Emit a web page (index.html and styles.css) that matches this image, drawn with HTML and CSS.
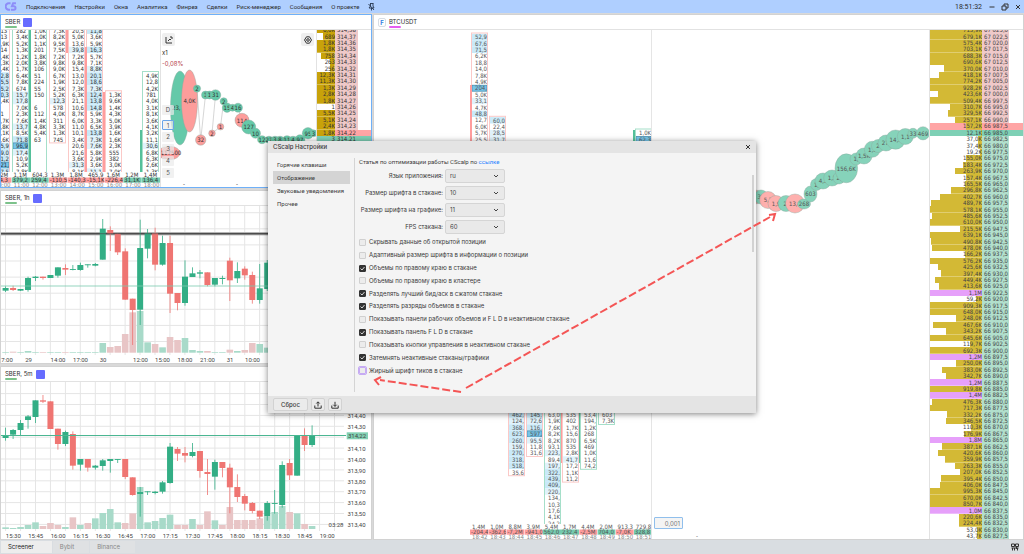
FILE: index.html
```html
<!DOCTYPE html>
<html lang="ru">
<head>
<meta charset="utf-8">
<title>CScalp</title>
<link rel="stylesheet" href="styles.css">
</head>
<body>
<header class="topbar">
  <svg class="logo" viewBox="0 0 12 10" aria-hidden="true"><path d="M5.500 1.500H3.500a3.200 3.200 0 0 0 0 7H5M11.500 1.500H8.300L7 4.800h2.200a1.850 1.850 0 0 1 0 3.700H6" fill="none" stroke="#8d8df8" stroke-width="2.200"/></svg>
  <nav class="menu">
    <button>Подключения</button><button>Настройки</button><button>Окна</button><button>Аналитика</button><button>Финрез</button><button>Сделки</button><button>Риск-менеджер</button><button>Сообщения</button><button>О проекте</button>
    <button class="pin" aria-label="Закрепить"><svg width="7" height="8" viewBox="0 0 7 8"><path d="M2 .5h3.500M2.500 .5v2.500L1 5h5M5 .5V3l1 2M3.500 5v2.500M.5 1l5.500 6" fill="none" stroke="#26374f" stroke-width=".9"/></svg></button>
  </nav>
  <time class="clock">18:51:32</time>
  <button class="win" aria-label="Свернуть"><svg width="8" height="8" viewBox="0 0 8 8"><path d="M1.500 4h5"/></svg></button>
  <button class="win" aria-label="Развернуть"><svg width="8" height="8" viewBox="0 0 8 8"><path d="M1 3h4v4H1zM3 3V1h4v4H5"/></svg></button>
  <button class="win" aria-label="Закрыть"><svg width="8" height="8" viewBox="0 0 8 8"><path d="M2 2l4 4M6 2L2 6"/></svg></button>
</header>

<main class="workspace">
  <section class="panel active">
    <h2 class="panel-title"><span class="ticker green">SBER</span><i class="swatch"></i></h2>
    <div class="panel-body">
      <svg class="clusters" id="sberClusters"></svg>
      <div class="tape">
        <svg class="fill" id="sberTape"></svg>
        <div class="tape-tools">
          <button class="tool" aria-label="График"><svg width="8" height="8" viewBox="0 0 8 8"><path d="M1 1v6h6M3 5l2-2 1 1M5 1h2v2"/></svg></button>
          <button class="tool" aria-label="Настройки стакана"><svg width="8" height="8" viewBox="0 0 8 8"><path d="M2.500 .8h3L7.500 4 5.500 7.200h-3L.5 4z"/><circle cx="4" cy="4" r="1.300"/></svg></button>
        </div>
        <p class="mult">x1</p>
        <p class="pct">-0,08%</p>
        <div class="lots"><button>D</button><button class="on">1</button><button>2</button><button>3</button><button>4</button><button>5</button></div>
      </div>
      <table class="ladder small" id="sberLadder"></table>
    </div>
  </section>

  <section class="panel big">
    <h2 class="panel-title"><b class="badge">F</b><span class="ticker pink">BTCUSDT</span></h2>
    <div class="panel-body">
      <div class="stage">
        <svg class="fill" id="btcStage"></svg>
        <input class="qty" aria-label="Объем" value="0,001">
      </div>
      <table class="ladder wide" id="btcLadder"></table>
    </div>
  </section>

  <section class="panel">
    <h2 class="panel-title"><span class="ticker green">SBER, 1h</span><i class="swatch"></i></h2>
    <div class="panel-body"><svg class="chart" id="hourChart"></svg></div>
  </section>
  <section class="panel">
    <h2 class="panel-title"><span class="ticker green">SBER, 5m</span><i class="swatch"></i></h2>
    <div class="panel-body"><svg class="chart" id="minuteChart"></svg></div>
  </section>
</main>

<footer class="tabs">
  <button class="tab current">Screener</button><button class="tab">Bybit</button><button class="tab">Binance</button>
  <button class="layout" aria-label="Раскладка"><svg width="8" height="8" viewBox="0 0 8 8"><path d="M.5 1h3v2.500h-3zM4.500 1h3v2.500h-3zM.5 5h7M1.500 5v2.500M3.500 5v2.500M5.500 3.500V6M6.500 5v2.500"/></svg></button>
</footer>

<div class="overlay">
  <section class="dialog" role="dialog" aria-label="CScalp Настройки">
    <header class="dialog-title"><h1>CScalp Настройки</h1><button class="win" aria-label="Закрыть"><svg width="8" height="8" viewBox="0 0 8 8"><path d="M2 2l4 4M6 2L2 6"/></svg></button></header>
    <div class="dialog-body">
      <nav class="side"><button>Горячие клавиши</button><button class="sel">Отображение</button><button>Звуковые уведомления</button><button>Прочее</button></nav>
      <form class="options">
        <p class="note">Статья по оптимизации работы CScalp по <a href="#">ссылке</a></p>
        <div class="selects">
          <label for="lang">Язык приложения:</label><select id="lang"><option>ru</option></select>
          <label for="domFont">Размер шрифта в стакане:</label><select id="domFont"><option>10</option></select>
          <label for="chartFont">Размер шрифта на графике:</label><select id="chartFont"><option>11</option></select>
          <label for="fps">FPS стакана:</label><select id="fps"><option>60</option></select>
        </div>
        <div class="checks">
          <label><input type="checkbox">Скрывать данные об открытой позиции</label>
          <label><input type="checkbox">Адаптивный размер шрифта в информации о позиции</label>
          <label><input type="checkbox" checked>Объемы по правому краю в стакане</label>
          <label><input type="checkbox">Объемы по правому краю в кластере</label>
          <label><input type="checkbox" checked>Разделять лучший бид/аск в сжатом стакане</label>
          <label><input type="checkbox" checked>Разделять разряды объемов в стакане</label>
          <label><input type="checkbox">Показывать панели рабочих объемов и F L D в неактивном стакане</label>
          <label><input type="checkbox" checked>Показывать панель F L D в стакане</label>
          <label><input type="checkbox">Показывать кнопки управления в неактивном стакане</label>
          <label><input type="checkbox" checked>Затемнять неактивные стаканы/графики</label>
          <label><input type="checkbox" class="marked">Жирный шрифт тиков в стакане</label>
        </div>
      </form>
      <i class="thumb"></i>
    </div>
    <footer class="dialog-foot">
      <button class="reset">Сброс</button>
      <button aria-label="Экспорт"><svg width="8" height="8" viewBox="0 0 8 8"><path d="M.8 4.500v2.700h6.400V4.500M4 5.500V1M2.300 2.500L4 .8l1.700 1.700"/></svg></button>
      <button aria-label="Импорт"><svg width="8" height="8" viewBox="0 0 8 8"><path d="M.8 4.500v2.700h6.400V4.500M4 .8v4.500M2.300 3.700L4 5.400l1.700-1.700"/></svg></button>
    </footer>
    <svg class="arrows" aria-hidden="true">
      <path class="dash" d="M198 247L502 76M193 251L112 239"/>
      <path d="M501 74l6-1-2 7M113 236l-6 3 4 5"/>
    </svg>
  </section>
</div>
<script src="app.js"></script>
</body>
</html>
```
FILE: styles.css
```css
* { box-sizing: border-box; }
html, body { height: 100%; margin: 0; }
body {
  display: flex; flex-direction: column; overflow: hidden;
  background: #d9d9d9; color: #2c2c2c;
  font: 6px/8px Inter, Roboto, "Liberation Sans", sans-serif;
}
h1, h2, p { margin: 0; font: inherit; }
button { font: inherit; color: inherit; border: 0; padding: 0; margin: 0; background: none; }
svg { display: block; }
button svg { fill: none; stroke: #333; stroke-width: 1; }

.topbar { flex: none; height: 13px; padding: 0 2px 0 5px; margin-bottom: 1px; display: flex; align-items: center; background: #afcfff; }
.logo { width: 12px; height: 9px; margin-right: 9px; }
.menu { display: flex; gap: 9px; flex: 1; font-family: Roboto, sans-serif; }
.clock { margin-right: 6px; font-size: 7px; font-family: Roboto, sans-serif; }
.win { width: 8px; height: 8px; }
.topbar .win { margin-left: 5px; }
.topbar .clock + .win { margin-left: 0; }

.workspace {
  flex: 1; min-height: 0; display: grid; gap: 2px 1px;
  grid-template-columns: 372px 1fr; grid-template-rows: repeat(3, minmax(0, 1fr));
}
.panel { display: flex; flex-direction: column; min-width: 0; min-height: 0; background: #fff; border: 1px solid #d2d2d2; }
.panel.active { border-color: #6fb0f8; }
.panel.big { grid-column: 2; grid-row: 1 / 4; }
.panel-title { flex: none; height: 15px; padding: 0 4px; display: flex; align-items: center; gap: 3px; border-bottom: 1px solid #e2e2e2; }
.ticker { position: relative; line-height: 10px; }
.ticker::after { content: ""; position: absolute; left: 0; bottom: -1px; width: 12px; height: 2px; border-radius: 1px; background: #7cc28b; }
.ticker.pink::after { background: #e55df0; }
.swatch { width: 9px; height: 9px; background: #666cff; border-radius: 1px; }
.badge { width: 8px; height: 9px; border: 1px solid #d8dde4; border-radius: 2px; color: #2f80e0; text-align: center; line-height: 7px; }
.panel-body { flex: 1; min-height: 0; display: flex; align-items: flex-end; overflow: hidden; }
.chart, .clusters, .tape, .stage { height: 100%; }
.chart { width: 100%; }
.clusters { flex: none; width: 159px; }
.tape, .stage { flex: 1; min-width: 0; position: relative; border-left: 1px solid #e2e2e2; }
.stage { border-left: 0; }
.fill { position: absolute; inset: 0; width: 100%; height: 100%; }

.tape-tools { position: relative; display: flex; justify-content: space-between; padding: 3px 2px 2px 1px; }
.tool { width: 13px; height: 13px; background: #efefef; border-radius: 2px; display: grid; place-items: center; }
.mult, .pct { position: relative; height: 11px; line-height: 10px; padding-left: 1px; }
.pct { color: #b64146; }
.lots { position: relative; display: flex; flex-direction: column; gap: 2px; width: 12px; margin: 35px 0 0 1px; color: #555; }
.lots button { height: 10px; background: rgba(235, 235, 235, .7); border-radius: 1px; text-align: center; }
.lots .on { border: 1px solid #6aa5e8; line-height: 7px; }
.lots button:first-child { margin-bottom: 3px; }

.ladder { flex: none; height: calc(100% + 3px); display: flex; flex-direction: column; border-left: 1px solid #e2e2e2; font: 6px/6px "DejaVu Sans Condensed", "DejaVu Sans", sans-serif; color: #444; }
.ladder tbody { flex: 1; display: flex; flex-direction: column; min-height: 0; }
.ladder tr { flex: 1 1 0; min-height: 0; display: flex; }
.ladder td { padding: 0; display: flex; align-items: center; white-space: nowrap; }
.ladder .vol { justify-content: flex-end; background: linear-gradient(var(--bar), var(--bar)) right / var(--w) 100% no-repeat; }
.ladder .price { padding-left: 2px; background: #efc9c9; }
.ladder .bid .price { background: #b1dfcc; }
.small { --bar: #c8a20a; width: 55px; color: #333; }
.small .vol { width: 18px; }
.small .price { width: 23px; }
.wide { --bar: #d3b935; width: 94px; }
.wide .vol { width: 52px; }
.wide .price { width: 27px; }
.ladder .huge { --bar: #e6a0fa; }
.ladder .best-ask, .ladder .best-ask .price { background: #ffa5a5; }
.ladder .best-bid, .ladder .best-bid .price { background: #7ed0b5; }
.qty { position: absolute; right: 246px; bottom: 10px; width: 29px; height: 12px; padding: 0 2px; border: 1px solid #90bfec; border-radius: 1px; background: #f4f4f4; font: inherit; color: #777; text-align: right; }

.cell { font: 6px "DejaVu Sans Condensed", "DejaVu Sans", sans-serif; fill: #333; }
.dim .cell { fill: #555; }
.mid { text-anchor: middle; }
.cell.time { fill: #888; }
.axis { font: 6px Roboto, sans-serif; fill: #444; text-anchor: middle; }
.grid { stroke: #e5e5e5; stroke-width: 1; fill: none; }

.tabs { flex: none; height: 14px; padding: 1px; display: flex; gap: 1px; background: #d9dde1; }
.tab { padding: 0 15px 0 7px; background: #dfe1e3; color: #888; }
.tab.current { background: #ededed; color: #222; padding-right: 18px; }
.layout { margin-left: auto; padding: 2px 4px; }

.overlay { position: absolute; inset: 0; display: grid; place-items: center; }
.dialog { position: relative; width: 488px; height: 272px; display: flex; flex-direction: column; background: #f4f4f4; box-shadow: 0 1px 6px rgba(0, 0, 0, .5); color: #3a3a3a; white-space: nowrap; }
.dialog-title { height: 12px; flex: none; display: flex; justify-content: space-between; align-items: center; padding: 0 4px 0 5px; background: #e4e4e4; }
.dialog-title h1 { font-weight: 500; }
.dialog-body { flex: 1; display: flex; min-height: 0; position: relative; padding-top: 5px; }
.side { flex: none; width: 82px; padding: 0 0 0 5px; display: flex; flex-direction: column; margin-right: 4px; font-family: Roboto, sans-serif; }
.side button { height: 13px; text-align: left; padding-left: 4px; }
.side .sel { background: #d4d4d4; }
.options { flex: 1; margin-bottom: 4px; border-left: 1px solid #d4d4d4; padding-left: 4px; display: flex; flex-direction: column; }
.note { height: 11px; line-height: 8px; font-family: Roboto, sans-serif; }
.note a { color: #1f82ff; text-decoration: none; }
.selects { display: grid; grid-template-columns: 84px 60px; gap: 3px 2px; align-items: center; text-align: right; }
.selects select { appearance: none; height: 14px; padding: 0 4px; border: 1px solid #d5d5d5; border-radius: 2px; font: inherit; color: #444;
  background: #e9e9e9 url("data:image/svg+xml,%3Csvg xmlns='http://www.w3.org/2000/svg' width='6' height='6'%3E%3Cpath d='M1 2l2 2 2-2' fill='none' stroke='%23444'/%3E%3C/svg%3E") right 5px center no-repeat; }
.checks { flex: 1; display: grid; grid-auto-rows: minmax(0, 1fr); margin: 2px 0 15px; }
.checks label { display: flex; align-items: center; gap: 3px; }
.checks input { appearance: none; width: 7px; height: 7px; margin: 0; border: 1px solid #d0d0d0; border-radius: 1px; background: #ececec; }
.checks input:checked { border-color: #333; background: #333 url("data:image/svg+xml,%3Csvg xmlns='http://www.w3.org/2000/svg' width='5' height='5'%3E%3Cpath d='M.5 2.500l1.500 1.500 2.500-3' fill='none' stroke='white' stroke-width='.8'/%3E%3C/svg%3E") center no-repeat; }
.checks .marked { outline: 1px solid #c6abf3; border-color: #c6abf3; }
.thumb { position: absolute; right: 2px; top: 22px; width: 2px; height: 77px; background: #d2d2d2; }
.dialog-foot { flex: none; height: 17px; display: flex; align-items: center; gap: 3px; padding-left: 5px; background: #e4e4e4; }
.dialog-foot button { width: 14px; height: 13px; display: grid; place-items: center; border: 1px solid #d2d2d2; border-radius: 2px; background: #ebebeb; }
.dialog-foot .reset { width: 35px; font-weight: 500; }
.arrows { position: absolute; inset: 0; width: 100%; height: 100%; overflow: visible; pointer-events: none; fill: none; stroke: #f45555; stroke-width: 2; }
.dash { stroke-dasharray: 8 3; }
```
FILE: app.js
```js
const GREEN = '#33ae85', RED = '#ef7572';
const PITCH = 6.4;
const byId = id => document.getElementById(id);
const rect = (x, y, w, h, fill, extra = '') => `<rect x="${x}" y="${y}" width="${w}" height="${h}" fill="${fill}" ${extra}/>`;
const text = (x, y, s, cls = 'cell') => `<text x="${x}" y="${y}" class="${cls}">${s}</text>`;

/* price ladders */
function ladder(id, rows, start, step, full, askIndex, format) {
  byId(id).innerHTML = '<tbody>' + rows.map((label, i) => {
    const n = parseFloat(label.replace(',', '.')) * (label.endsWith('M') ? 1e6 : label.endsWith('K') ? 1e3 : 1);
    const cls = [i > askIndex ? 'bid' : 'ask', n >= 1e6 ? 'huge' : '', i === askIndex ? 'best-ask' : '', i === askIndex + 1 ? 'best-bid' : ''].join(' ');
    return `<tr class="${cls}"><td class="vol" style="--w:${Math.min(100, n / full * 100).toFixed(1)}%">${label}</td><td class="price">${format(start - i * step)}</td></tr>`;
  }).join('') + '</tbody>';
}
const btc = '713,9 679,1 575,4 703,1 688,3 690,6 370,0 418,1 774,2 928,2 423,6 509,4 310,7 329,5 257,1 157,2 12,1 37,0 37,4 19,2 155,0 183,4 263,9 157,4 165,5 296,8 402,7 489,7 578,1 485,6 610,0 215,5 639,1 490,8 478,0 166,2 576,2 425,6 397,4 449,4 413,6 1,1M 59,2 909,3 648,0 248,0 467,6 343,2 645,6 119,7 692,3 1,2M 250,0 383,0 342,7 1,2M 919,8 1,4M 476,3 717,3 332,2 346,5 110,3 176,9 1,8M 387,1 420,6 359,9 263,3 207,0 395,4 406,0 995,3 670,0 850,7 1,0M 220,6 224,4 53,0 43,7'
  .split(' ').map(v => v.endsWith('M') ? v : v + 'K');
ladder('btcLadder', btc, 67025, 2.5, 5e5, 15, p => p.toFixed(1).replace('.', ',').replace(/^(\d\d)/, '$1 '));
ladder('sberLadder', '6,0K 689 1,8K 1,8K 758 263 256 12,3K 11,3K 1,3K 2,8K 1,8K 1 5,5K 5,1K 2,4K 1,8K 3 1,2K 2,0K 3,1K 1,4K 2,2K 5,0K 1,1K'.split(' '),
  314.38, 0.01, 1000, 16, p => p.toFixed(2).replace('.', ','));

/* volume clusters: x, first row centre, side, cells, frame edges */
function cluster(c, w = 17) {
  const color = c.side === 'g' ? '#a5dfc9' : '#fbc9c7';
  const cells = c.cells.split(' ');
  let out = '';
  cells.forEach((s, i) => {
    if (s === '.') return;
    const y = c.y + i * PITCH;
    const n = parseFloat(s.replace(',', '.'));
    const big = s.endsWith('K') || c.thousands && s.includes(',');
    const thousandsOnly = !c.thousands || !s.endsWith('K') || n > c.shade;
    const strong = (c.hot || []).includes(i);
    if (strong) out += rect(1, y - 3, w - 2, 6, '#76c4e8', 'stroke="#3f87a8" stroke-width=".7"');
    else if (big && thousandsOnly && n > c.shade) out += rect(1, y - 3.2, w - 1, PITCH, n > c.shade * 1.6 ? '#c9e9f8' : '#e0f2fb');
    out += text(4, y + 2.2, s);
  });
  const top = c.open ? c.y - 20 : c.y - 4, bottom = c.y + cells.length * PITCH - 3;
  out += `<rect x=".5" y="${top}" width="${w - 1}" height="${(c.long ? bottom + 60 : bottom) - top}" fill="none" stroke="${color}"/>`;
  return `<svg x="${c.x}" y="0" width="${w}" height="${c.clip || 540}">${out}</svg>`;
}
function totals(x, y, step, sums, deltas, times) {
  sums = sums.split(' '); deltas = deltas.split(' '); times = times.split(' ');
  return sums.map((s, i) => `<svg x="${x + i * step}" y="0" width="${step}" height="540">`
    + rect(0, y + 2.800, step, 5.200, deltas[i][0] === '-' ? '#ff9b9b' : '#74cbae')
    + text(2, y + 2, s) + text(1, y + 7.600, deltas[i]) + text(2, y + 12.500, times[i], 'cell time') + '</svg>').join('');
}

let out = [
  { x: -7, y: 30.7, side: 'r', open: 1, long: 1, shade: 5.500, cells: '113 913 2,9K 114 3,4K 1,3K 2,4K 12,8K 15,5K 15,2K 10,3K 1,4K 3 31 1,7K 1,8K 1,1K 4,6K 15,9K 19,0K 11,2K 221,0 17,5K', hot: [21] },
  { x: 12, y: 30.7, side: 'g', open: 1, long: 1, shade: 12, cells: '282 3,4K 5,2K 1,3K 1,2K 2,0K 1,7K 6,4K 7,8K 674 15,7K 17,8K 7,0K 2,3K 7,6K 13,7K 8,5K 71,8K 96,9K 17,4K 10,9K 5,2K 7,8K', hot: [18] },
  { x: 30, y: 30.7, side: 'g', open: 1, long: 1, shade: 50, cells: '1,0K 1,0K 1,1K 201 1,8K 3,8K 106 51 224 55 150 . 6 112 1,4K 4,8K 5,4K 63' },
  { x: 49, y: 30.7, side: 'r', open: 1, shade: 11, cells: '7,3K 8,2K 9,5K 7,5K 7,2K 9,8K 9,0K 6,7K 1,9K 2,5K 5,2K 12,3K 578 4,0K 311 3,3K 1,3K 745' },
  { x: 68, y: 30.7, side: 'r', open: 1, long: 1, shade: 30, cells: '20,5K 5,0K 13,6K 39,8K 7,2K 9,8K 15,4K 13,0K 12,0K 7,3K 6,3K 21,1K 10,6K 8,7K 6,0K 11,0K 10,1K 3,4K 20,6K 21,6K 3,6K 31,3K 8,1K' },
  { x: 86, y: 30.7, side: 'r', open: 1, long: 1, shade: 7.200, cells: '11,8K 3,6K 5,9K 16,3K 5,7K 7,1K 8,8K 20,1K 18,6K 7,3K 12,4K 13,8K 14,8K 5,9K 3,3K 6,5K 13,8K 7,3K 7,6K 5,8K 2,9K 3,6K 11,1K' },
  { x: 105, y: 94.7, side: 'r', long: 1, shade: 50, cells: '1,3K 9,6K 1,4K 4,3K 5,0K 3,9K 1,6K 1,6K 2,3K 555 382 3,0K 7,0K' },
  { x: 142, y: 75.500, side: 'g', long: 1, shade: 25, cells: '4,9K 12,8K 4,2K 781 4,0K 3,1K 8,1K 3,6K 4,1K 3,2K 11,1K 30,6K 6,8K 6,3K 2,6K 1,3K' }
].map(c => cluster({ ...c, clip: 172 })).join('');
out += rect(29, 30, 2, 142, '#55c09a') + rect(66, 30, 2, 23, '#ff9d9d') + rect(85, 47, 2, 125, '#ff9d9d')
  + rect(103, 92, 2, 80, '#ff9d9d') + rect(140, 130, 2, 42, '#55c09a');
out += totals(-7, 174.700, 18.600, '4,2M 1,1M 604,3 1,3M 1,8M 465,9 1,6M 1,2M 1,4M', '-24,3 379,2 259,4 -110,5 -140,3 -15,1K -226,4 31,1K 136,4', '10:00 11:00 12:00 13:00 14:00 15:00 16:00 17:00 18:00');
byId('sberClusters').innerHTML = `<g transform="translate(-1 -30)">${out}</g>`;

/* trade bubbles: x, y, rx, ry, side, label */
const bubbles = (list, g, r) => list.map(([x, y, rx, ry, side, label]) =>
  `<ellipse cx="${x}" cy="${y}" rx="${rx}" ry="${ry}" fill="${side === 'g' ? g : r}" stroke="#8aa79c" stroke-width=".4"/>`
  + (label ? text(x, y + 2.2, label, 'cell mid') : '')).join('');

const ticks = [
  [165, 153, 6, 6, 'r', ''], [171, 153, 9, 6.500, 'r', '117500'],
  [180, 108, 9.500, 37, 'g', ''], [189.500, 101, 8, 31, 'r', '4,0K'], [197, 88.600, 3.600, 3.600, 'g', '2'],
  [200.700, 140, 5.200, 5.200, 'r', '32'], [205.500, 95, 4, 4, 'g', '1'], [209.500, 95, 4, 4, 'g', '1'], [215.500, 95, 5.300, 5.300, 'g', '31'],
  [212, 133.300, 3.300, 3.300, 'r', '2'], [220.500, 126.700, 3.300, 3.300, 'r', '1'], [223.700, 101.300, 3.600, 3.600, 'g', '2'],
  [227, 107.700, 4.700, 4.700, 'g', '15'], [232.500, 107.700, 3.500, 3.500, 'g', '4'], [238, 107.700, 4.500, 4.500, 'g', '16'],
  [242, 120.300, 7, 7, 'r', '114'], [248.700, 127, 7, 7, 'g', '127'], [255.500, 133.300, 5, 5, 'g', '10'],
  [262, 139.700, 4.500, 4, 'g', '12'], [269, 139.700, 4, 3.500, 'g', '27'], [275, 139.700, 4, 3.500, 'g', '3'], [280, 139.700, 4, 3.500, 'g', '8'],
  [287, 139.700, 4.500, 4, 'g', '11'], [293, 139.700, 4, 3.500, 'g', '4'], [300, 139.700, 5, 5, 'g', '97'], [308, 133.300, 5.700, 5.700, 'g', '95'], [313.500, 133.300, 3.500, 3.500, 'g', '3']
];
byId('sberTape').innerHTML = `<g transform="translate(-161 -30)">
  <polyline points="${ticks.slice(2).map(t => t[0] + ',' + t[1]).join(' ')}" fill="none" stroke="#c4c4c4" stroke-width=".7"/>
  ${bubbles(ticks, '#65c9a9', '#fd9d9b')}${text(172, 110.200, '23,')}${text(183, 186, '-')}${text(236, 186, '-')}</g>`;

/* BTC stage */
out = [
  { x: 471, y: 37, side: 'r', long: 1, shade: 30, cells: '52,9K 67,6K 71,5K 6,2K 18,8K 14,0K 7,8K 4,9K 204,1 5,0K 33,1K 4,7K 48,8K 12,7K 6,0K 5,7K 25,5K', hot: [8] },
  { x: 489, y: 120.300, side: 'r', long: 1, shade: 25, cells: '60,0K 22,4K 28,5K 31,7K' },
  { x: 635, y: 133, side: 'g', long: 1, shade: 50, cells: '1,0K 62,3K', hot: [1] },
  { x: 508, y: 414.700, side: 'r', open: 1, thousands: 1, shade: 100, cells: '462,4 124,2 368,5 623,0 260,2 159,1 270,2 318,9 518,5 35,6K' },
  { x: 526, y: 414.700, side: 'r', open: 1, thousands: 1, shade: 65, cells: '145,0 72,6K 116,4 597,3 95,5K 11,8K 31,6K', hot: [3] },
  { x: 544, y: 414.700, side: 'g', open: 1, thousands: 1, shade: 190, cells: '63,0K 1,9K 7,6K 8,2K 8,2K 93,1K 223,2 89,4K 197,2 322,9 439,0 409,2 220,4 134,4 10,3K 17,6K 4,1K 24,2K', clip: 524 },
  { x: 562, y: 414.700, side: 'r', open: 1, shade: 30, cells: '535 402 1,7K 15,6K 870 535 2,8K 41,7K 17,2K 1,1K 11,2K' },
  { x: 580, y: 414.700, side: 'g', open: 1, shade: 80, cells: '53,4K 194,2 1,2K 268 6,5K 469 1,0K 11,6K 74,2K' },
  { x: 598, y: 414.700, side: 'g', open: 1, shade: 80, cells: '603 7,3K' }
].map(c => cluster(c)).join('');
out += rect(470, 85, 2, 60, '#ff9d9d') + rect(633, 130, 2, 20, '#55c09a') + rect(561, 413, 1, 50, '#ff9d9d') + rect(579, 413, 1, 50, '#55c09a');
out += totals(470, 526.700, 18.200, '1,4M 1,0M 8,8M 3,9M 5,4M 1,7M 4,4M 2,0M 913,3 729,8', '-204,4 -362,6 -7,2M -941,0 562,0 232,4 -2,5M 704,0 -7,0K 328,8', '18:42 18:43 18:44 18:45 18:46 18:47 18:48 18:49 18:50 18:51');
out += '<path class="grid" d="M651.500 30V540"/>' + text(696, 538, '-');
out += bubbles([
  [755, 197, 7, 7, 'r', ''], [761, 197, 7, 7, 'g', '35'], [768, 200, 8.500, 8.500, 'r', '5,7'], [776, 203.500, 8, 8, 'r', '1,9'],
  [786, 203.500, 8, 8, 'g', '2,'], [795, 203.500, 9.500, 9.500, 'r', '13,4'], [804, 204, 6.500, 5, 'g', '268'], [810.500, 194, 6.500, 8, 'g', '603'],
  [816.500, 184.500, 6, 6, 'g', '1,'], [823, 181, 8, 8, 'g', '4,1'], [832, 178, 8.300, 8, 'g', '1,5'], [839, 178, 6, 6, 'g', '2,'],
  [846.300, 168.300, 11.300, 14.500, 'g', '156,6K'], [856, 159, 6, 6, 'g', '1,'], [864, 156, 8, 8, 'g', '1,5K'], [872.300, 149.300, 8, 8, 'g', '1,5'],
  [878, 146, 6.500, 6.500, 'g', '2'], [886, 143, 8, 8, 'g', '27,'], [895.600, 139.600, 9.600, 9.600, 'g', '14,5'], [905.300, 136.500, 8, 8, 'g', '1,1'],
  [913, 133.300, 5, 5, 'g', '33'], [923, 133.300, 6.600, 6.600, 'g', '469']
], '#86d3ba', '#feb0ae');
byId('btcStage').innerHTML = `<g class="dim" transform="translate(-374 -30)">${out}</g>`;

/* candles: body top, body bottom, wick top, wick bottom, direction, volume top (thirds of a pixel) */
function candles(data, base) {
  return data.trim().split('\n').map((line, i) => {
    const [t, b, h, l, dir, v] = line.trim().split(' ').map((s, k) => k === 4 ? s : s / 3);
    const x = 5.600 + i * 7.475, c = dir === 'u' ? GREEN : RED;
    return rect(x - 3.300, v, 6.600, base - v, dir === 'u' ? '#a8dac9' : '#e8c5c6')
      + rect(x - .4, h, .8, l - h, c) + rect(x - 3, t, 6, Math.max(b - t, .9), c);
  }).join('');
}
const lines = (xs, ys, bottom, right, top) => `<path class="grid" d="${xs.map(x => `M${x} ${top}V${bottom}`).join('')}${ys.map(y => `M0 ${y}H${right}`).join('')}"/>`;
const range = (n, from, step) => Array.from({ length: n }, (_, i) => +(from + i * step).toFixed(2));

const hour = candles(`309 317 304 321 u 501
309 315 302 318 d 500
312 317 312 318 u 501
279 315 275 320 u 498
275 279 273 288 u 501
275 279 275 284 d 501
270 279 270 279 u 501
247 272 247 278 u 501
249 254 238 270 d 501
252 254 240 256 u 501
240 255 233 257 u 501
238 240 238 248 u 501
237 242 234 244 u 501
131 224 102 224 u 474
135 146 124 198 d 486
146 202 146 210 d 483
199 344 190 344 d 447
341 375 341 480 d 382
189 374 104 420 u 378
144 191 132 220 u 472
144 239 128 256 d 477
174 239 152 242 u 487
174 326 152 384 d 456
324 354 324 376 d 465
275 354 226 362 u 459
265 276 247 276 u 495
262 266 255 280 u 498
262 300 262 304 d 498
279 299 279 304 u 501
279 282 272 298 u 501
227 286 218 348 d 494
258 280 232 294 u 498
251 271 244 284 d 495
270 345 260 356 d 474
310 345 237 356 u 477
233 312 225 318 u 488`, 167.700);
byId('hourChart').innerHTML = '<g transform="translate(-1 -21)">'
  + lines(range(25, 5.500, 14.950), range(9, 27.700, 16.100), 170, 372, 20)
  + rect(0, 47, 372, 3.400, '#b5b5b5') + rect(0, 48, 372, 1.400, '#555') + hour
  + rect(0, 48.200, 372, 1, '#444', 'opacity=".6"') + rect(0, 100.500, 372, 1, '#7cc9ae', 'opacity=".8"')
  + [['7:00', 7], ['29', 28.500], ['14:00', 58], ['17:00', 80.500], ['30', 103], ['12:00', 140.500], ['15:00', 162.500], ['18:00', 185], ['21:00', 207.500], ['31', 230], ['10:00', 252.500]]
    .map(([s, x]) => text(x, 176.500, s, 'axis')).join('') + '</g>';

const minute = candles(`212 219 188 227 u 487
195 209 192 222 u 489
174 195 165 212 u 486
154 165 150 191 u 480
106 156 106 174 u 472
106 110 90 114 d 483
109 192 109 192 d 474
191 237 191 254 d 480
201 237 197 243 u 486
207 302 199 314 d 457
282 299 282 317 u 480
282 308 282 320 d 474
302 308 300 314 u 460
286 303 282 317 u 444
282 288 282 323 u 432
282 284 282 294 u 472
282 336 282 342 d 474
337 390 337 392 d 445
381 387 366 455 u 366
379 381 379 390 u 472
380 384 378 388 u 468
352 380 348 386 u 459
245 354 234 356 u 449
252 266 246 288 d 480
264 272 246 292 d 480
261 273 234 277 u 462
258 318 258 338 d 480
321 327 282 390 d 439
291 335 284 374 u 466
291 309 291 337 d 480
308 367 296 445 d 426
366 396 328 411 d 465
393 416 387 436 d 465
414 438 411 445 d 465
437 455 437 462 d 460
414 453 408 467 u 453
414 416 375 446 u 441
300 420 289 428 u 423
294 331 282 345 d 441
213 332 210 332 u 445
213 240 190 258 d 477
210 240 181 246 u 483`, 164);
const fiveMinuteTimes = range(15, 0, 15).map(m => `${15 + Math.floor((m + 30) / 60)}:${String((m + 30) % 60).padStart(2, '0')}`);
byId('minuteChart').innerHTML = '<g transform="translate(-1 -17)">'
  + lines(range(23, 5.600, 14.950), range(13, 28.600, 10.900), 166, 344, 16)
  + minute + rect(0, 70, 346, 1, '#4bb692')
  + range(11, 0, 1).filter(i => i !== 2).map(i => text(356.500, 53.400 + i * 10.860, (314.4 - i * .1).toFixed(2).replace('.', ','), 'axis')).join('')
  + rect(346.700, 67.300, 21.300, 7, '#82d0b3') + text(357, 73, '314,22', 'axis')
  + text(336, 162, '03:28', 'axis')
  + fiveMinuteTimes.map((s, i) => text(13.300 + i * 22.420, 172.700, s, 'axis')).join('') + '</g>';
```
